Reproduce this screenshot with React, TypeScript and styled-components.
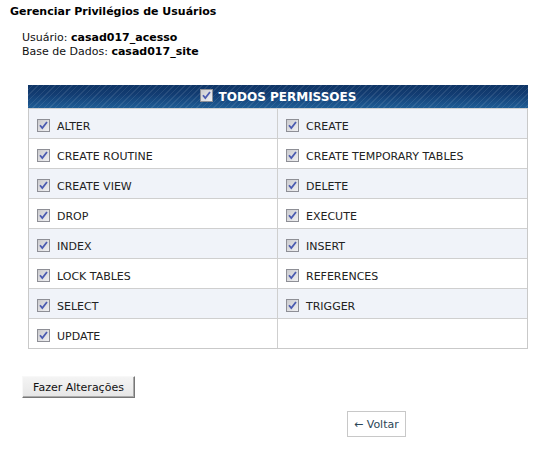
import React from "react";
import styled, { createGlobalStyle } from "styled-components";

const Global = createGlobalStyle`
  html, body { margin: 0; padding: 0; background: #fff; }
  body { font-family: "DejaVu Sans", Verdana, sans-serif; font-size: 11px; color: #000; }
`;

const Page = styled.div`
  width: 552px;
  height: 453px;
  box-sizing: border-box;
  padding: 5px 0 0 10px;
  display: flex;
  flex-direction: column;
`;

const Title = styled.h1`
  margin: 0;
  font-size: 11px;
  font-weight: bold;
  line-height: 14px;
`;

const Info = styled.div`
  margin: 12px 0 0 12px;
  line-height: 14px;
  color: #111;
  b { font-weight: bold; color: #000; }
`;

const Grid = styled.div`
  margin: 26px 0 0 18px;
  width: 498px;
  display: grid;
  grid-template-columns: 248px 250px;
  border: 1px solid #c9c9c9;
  border-top: none;
`;

const Header = styled.div`
  grid-column: 1 / -1;
  height: 23px;
  display: flex;
  align-items: center;
  justify-content: center;
  gap: 6px;
  color: #fff;
  font-weight: bold;
  font-size: 12px;
  background:
    repeating-linear-gradient(135deg, rgba(255,255,255,0) 0 3px, rgba(255,255,255,0.09) 3px 4px),
    linear-gradient(#0f3566 0%, #123c72 40%, #1f5d95 100%);
  margin: 0 -1px;
`;

const Cell = styled.div<{ $alt: boolean; $right?: boolean }>`
  box-sizing: border-box;
  height: 30px;
  display: flex;
  align-items: center;
  gap: 7px;
  padding: 5px 0 0 8px;
  background: ${(p) => (p.$alt ? "#f0f3f9" : "#fff")};
  border-top: 1px solid #cfcfcf;
  border-left: ${(p) => (p.$right ? "1px solid #cfcfcf" : "none")};
  color: #222;
  font-size: 11px;
`;

const Box = styled.svg`
  flex: none;
  width: 13px;
  height: 13px;
  margin-top: -2px;
`;

const Check = () => (
  <Box viewBox="0 0 13 13">
    <defs>
      <linearGradient id="cbg" x1="0" y1="0" x2="1" y2="1">
        <stop offset="0" stopColor="#c9c9cc" />
        <stop offset="1" stopColor="#f2f2f4" />
      </linearGradient>
    </defs>
    <rect x="0.5" y="0.5" width="12" height="12" fill="url(#cbg)" stroke="#8e8f96" />
    <path d="M3 6.2 L5.3 9 L10 3" fill="none" stroke="#4b5bb0" strokeWidth="1.8" />
  </Box>
);

const Actions = styled.div`
  margin: 27px 0 0 12px;
`;

const Button = styled.button`
  font-family: "DejaVu Sans", Verdana, sans-serif;
  font-size: 11px;
  color: #111;
  height: 22px;
  width: 113px;
  padding: 0;
  background: linear-gradient(#f4f4f4, #e6e6e6);
  border: 1px solid;
  border-color: #f8f8f8 #777 #777 #f8f8f8;
  box-shadow: inset -1px -1px 0 #aaa;
`;

const BackRow = styled.div`
  margin: 13px 0 0 337px;
`;

const Back = styled.a`
  display: inline-flex;
  align-items: center;
  height: 26px;
  box-sizing: border-box;
  padding: 0 6px;
  border: 1px solid #c8c8c8;
  color: #2c4657;
  font-size: 11px;
  text-decoration: none;
`;

const perms = [
  "ALTER", "CREATE",
  "CREATE ROUTINE", "CREATE TEMPORARY TABLES",
  "CREATE VIEW", "DELETE",
  "DROP", "EXECUTE",
  "INDEX", "INSERT",
  "LOCK TABLES", "REFERENCES",
  "SELECT", "TRIGGER",
  "UPDATE", "",
];

export default function App() {
  return (
    <>
      <Global />
      <Page>
        <Title>Gerenciar Privilégios de Usuários</Title>
        <Info>
          <div>Usuário: <b>casad017_acesso</b></div>
          <div>Base de Dados: <b>casad017_site</b></div>
        </Info>
        <Grid>
          <Header>
            <Check />
            <span>TODOS PERMISSOES</span>
          </Header>
          {perms.map((p, i) => (
            <Cell key={i} $alt={Math.floor(i / 2) % 2 === 0} $right={i % 2 === 1}>
              {p && <Check />}
              {p}
            </Cell>
          ))}
        </Grid>
        <Actions>
          <Button>Fazer Alterações</Button>
        </Actions>
        <BackRow>
          <Back href="#">← Voltar</Back>
        </BackRow>
      </Page>
    </>
  );
}
